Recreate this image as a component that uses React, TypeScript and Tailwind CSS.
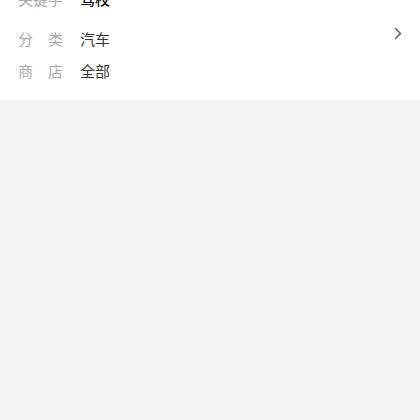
import React from "react";

function Label({ chars }: { chars: string[] }) {
  return (
    <div className="flex w-[45px] justify-between text-[#a8a8a8]">
      {chars.map((c, i) => (
        <span key={i}>{c}</span>
      ))}
    </div>
  );
}

export default function App() {
  return (
    <div
      className="h-[420px] w-[420px] overflow-hidden bg-[#f4f4f4] text-[15px]"
      style={{ fontFamily: '"Noto Sans CJK SC", "Noto Sans", sans-serif' }}
    >
      <div className="mt-[-17px] bg-white pb-[13px] pl-[18px] pr-[18px]">
        <div className="flex h-[32px] items-center gap-[17px]">
          <Label chars={["关", "键", "字"]} />
          <span className="font-medium text-[#111]">驾校</span>
        </div>
        <div className="mt-[8px] flex h-[32px] items-center justify-between">
          <div className="flex items-center gap-[17px]">
            <Label chars={["分", "类"]} />
            <span className="text-[#333]">汽车</span>
          </div>
          <svg
            width="8"
            height="13"
            viewBox="0 0 8 13"
            className="mb-[12px]"
            fill="none"
            stroke="#666"
            strokeWidth="1.6"
            strokeLinecap="round"
            strokeLinejoin="round"
          >
            <path d="M1.5 1.5 L6.5 6.5 L1.5 11.5" />
          </svg>
        </div>
        <div className="flex h-[32px] items-center gap-[17px]">
          <Label chars={["商", "店"]} />
          <span className="text-[#333]">全部</span>
        </div>
      </div>
    </div>
  );
}
